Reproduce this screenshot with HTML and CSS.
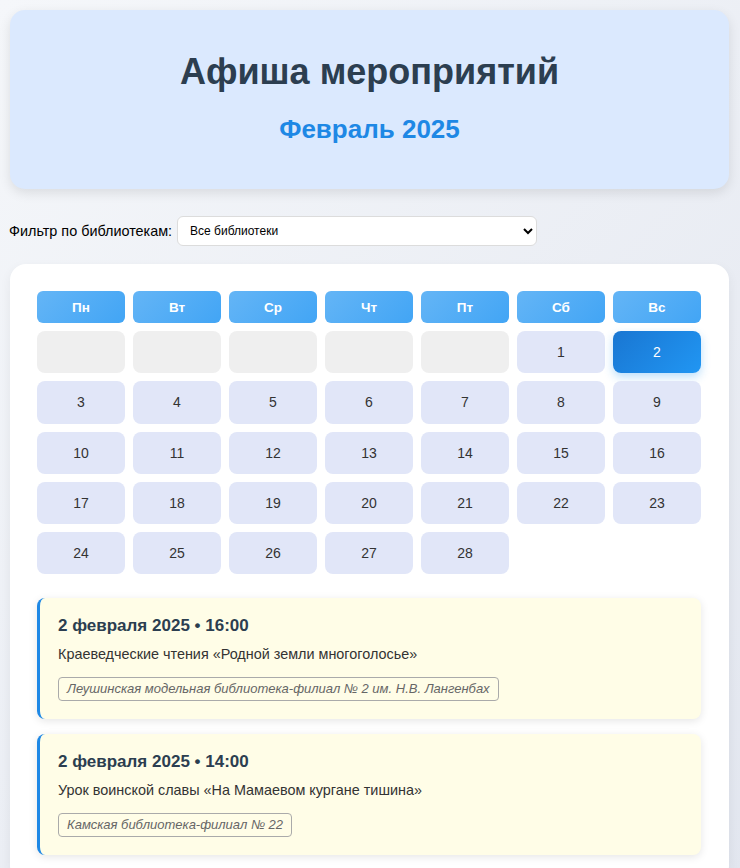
FILE: index.html
```html
<!DOCTYPE html>
<html lang="ru">
<head>
<meta charset="utf-8">
<title>Афиша мероприятий</title>
<link rel="stylesheet" href="styles.css">
</head>
<body>
<header class="hero">
  <h1 class="hero-title">Афиша мероприятий</h1>
  <h2 class="hero-month">Февраль 2025</h2>
</header>

<div class="filter">
  <label class="filter-label" for="lib">Фильтр по библиотекам:</label>
  <select class="filter-select" id="lib">
    <option>Все библиотеки</option>
  </select>
</div>

<main class="calendar-card">
  <div class="grid">
    <div class="wd">Пн</div><div class="wd">Вт</div><div class="wd">Ср</div><div class="wd">Чт</div><div class="wd">Пт</div><div class="wd">Сб</div><div class="wd">Вс</div>
    <div class="day empty"></div><div class="day empty"></div><div class="day empty"></div><div class="day empty"></div><div class="day empty"></div>
    <div class="day">1</div><div class="day active">2</div>
    <div class="day">3</div><div class="day">4</div><div class="day">5</div><div class="day">6</div><div class="day">7</div><div class="day">8</div><div class="day">9</div>
    <div class="day">10</div><div class="day">11</div><div class="day">12</div><div class="day">13</div><div class="day">14</div><div class="day">15</div><div class="day">16</div>
    <div class="day">17</div><div class="day">18</div><div class="day">19</div><div class="day">20</div><div class="day">21</div><div class="day">22</div><div class="day">23</div>
    <div class="day">24</div><div class="day">25</div><div class="day">26</div><div class="day">27</div><div class="day">28</div>
  </div>

  <section class="events">
    <article class="event">
      <h3 class="event-title">2 февраля 2025 • 16:00</h3>
      <p class="event-desc">Краеведческие чтения «Родной земли многоголосье»</p>
      <span class="event-lib">Леушинская модельная библиотека-филиал № 2 им. Н.В. Лангенбах</span>
    </article>
    <article class="event">
      <h3 class="event-title">2 февраля 2025 • 14:00</h3>
      <p class="event-desc">Урок воинской славы «На Мамаевом кургане тишина»</p>
      <span class="event-lib">Камская библиотека-филиал № 22</span>
    </article>
  </section>
</main>
</body>
</html>
```

FILE: styles.css
```css
html {
  background: linear-gradient(135deg, #f5f7fa 0%, #e2e6ef 100%);
  min-height: 100%;
}
body {
  margin: 0;
  padding: 10px 11px 10px 10px;
  font-family: "Liberation Sans", Arial, sans-serif;
  color: #333;
}
.hero {
  background: #dbe9fe;
  border-radius: 15px;
  padding: 20px;
  text-align: center;
  box-shadow: 0 4px 12px rgba(0, 0, 0, 0.1);
}
.hero-title {
  margin: 21px 0 0;
  font-size: 36px;
  line-height: 42px;
  color: #2c3e50;
  font-weight: bold;
}
.hero-month {
  margin: 21px 0 25px;
  font-size: 26px;
  line-height: 30px;
  color: #1e88e5;
  font-weight: bold;
}
.filter {
  display: flex;
  align-items: center;
  gap: 5px;
  margin: 27px 0 18px -1px;
}
.filter-label {
  font-size: 14.4px;
  color: #000;
}
.filter-select {
  width: 360px;
  height: 30px;
  font-family: "Liberation Sans", Arial, sans-serif;
  font-size: 12px;
  color: #000;
  background: #fff;
  border: 1px solid #dcdcdc;
  border-radius: 6px;
  padding: 0 8px;
}
.calendar-card {
  background: #fff;
  border-radius: 16px;
  padding: 27px 28px 27px 27px;
  box-shadow: 0 4px 12px rgba(0, 0, 0, 0.06);
}
.grid {
  display: grid;
  grid-template-columns: repeat(7, 1fr);
  gap: 8px;
}
.wd {
  height: 32px;
  display: flex;
  align-items: center;
  justify-content: center;
  border-radius: 6px;
  background: linear-gradient(135deg, #64b5f6, #42a5f5);
  color: #fff;
  font-weight: bold;
  font-size: 13.5px;
}
.day {
  height: 42.3px;
  display: flex;
  align-items: center;
  justify-content: center;
  border-radius: 8px;
  background: #e1e6f8;
  font-size: 14px;
  color: #333;
}
.day.empty {
  background: #efefef;
}
.day.active {
  background: linear-gradient(135deg, #1976d2, #2196f3);
  color: #fff;
  box-shadow: 0 4px 10px rgba(33, 150, 243, 0.3);
}
.events {
  margin-top: 24px;
  display: flex;
  flex-direction: column;
  gap: 15px;
}
.event {
  background: #fffde7;
  border-left: 3px solid #1e88e5;
  border-radius: 8px;
  padding: 18px;
  box-shadow: 0 2px 8px rgba(0, 0, 0, 0.1);
}
.event-title {
  margin: 0 0 10px;
  font-size: 17px;
  line-height: 19px;
  font-weight: bold;
  color: #2c3e50;
}
.event-desc {
  margin: 0 0 14px;
  font-size: 14.4px;
  line-height: 18px;
  color: #333;
}
.event-lib {
  display: inline-block;
  border: 1px solid #aaa;
  border-radius: 4px;
  padding: 3px 8px;
  font-size: 13px;
  line-height: 16px;
  font-style: italic;
  color: #666;
}
```
